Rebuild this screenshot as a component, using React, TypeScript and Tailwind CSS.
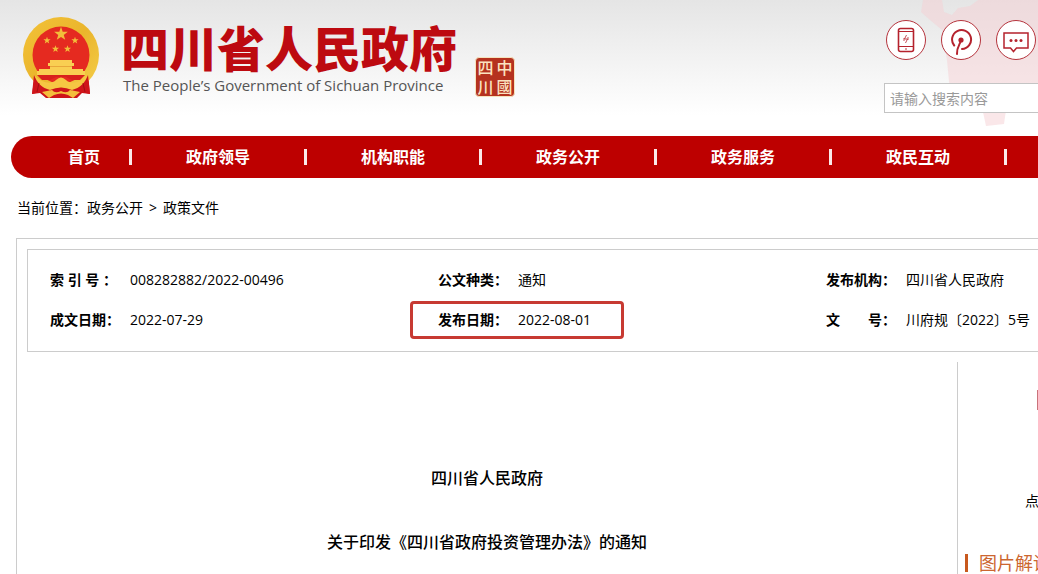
import type { ReactNode } from "react";

interface NavItem {
  label: string;
  href: string;
}

interface DocField {
  label: string;
  value: string;
  highlight?: boolean;
}

const navItems: NavItem[] = [
  { label: "政府领导", href: "#leaders" },
  { label: "机构职能", href: "#departments" },
  { label: "政务公开", href: "#open" },
  { label: "政务服务", href: "#services" },
  { label: "政民互动", href: "#interaction" },
];

const docRows: DocField[][] = [
  [
    { label: "索 引 号 ：", value: "008282882/2022-00496" },
    { label: "公文种类：", value: "通知" },
    { label: "发布机构：", value: "四川省人民政府" },
  ],
  [
    { label: "成文日期：", value: "2022-07-29" },
    { label: "发布日期：", value: "2022-08-01", highlight: true },
    { label: "文　　号：", value: "川府规〔2022〕5号" },
  ],
];

const STAR = "0,-10 2.35,-3.24 9.51,-3.09 3.8,1.24 5.88,8.09 0,4 -5.88,8.09 -3.8,1.24 -9.51,-3.09 -2.35,-3.24";

function Emblem() {
  return (
    <svg viewBox="0 0 78 82" className="h-[82px] w-[78px] shrink-0" aria-hidden="true">
      <defs>
        <linearGradient id="gold" x1="0" y1="0" x2="1" y2="1">
          <stop offset="0" stopColor="#f3c238" />
          <stop offset="0.5" stopColor="#eab52c" />
          <stop offset="1" stopColor="#f5cf4b" />
        </linearGradient>
      </defs>
      <path d="M13 57 L10 77 L18 76 L24 81 H55 L60 76 L68 77 L66 57 Z" fill="#c9141a" />
      <circle cx="39" cy="38" r="38" fill="url(#gold)" />
      <circle cx="39" cy="38" r="28.5" fill="#e52a20" />
      <g fill="#f2bd3a">
        <polygon points={STAR} transform="translate(39 17) scale(0.72)" />
        <polygon points={STAR} transform="translate(25 23.5) scale(0.38)" />
        <polygon points={STAR} transform="translate(53 23.5) scale(0.38)" />
        <polygon points={STAR} transform="translate(33.5 32) scale(0.38)" />
        <polygon points={STAR} transform="translate(45.5 32) scale(0.38)" />
      </g>
      <path d="M28 43 H50 V46 H52 V49 H50 V52 H61 V54 H63 V58 H15 V54 H17 V52 H28 V49 H26 V46 H28 Z" fill="#f9cf52" />
      <path d="M28 49.500 H50" stroke="#e8a83a" strokeWidth="1" />
      <path d="M15 58 H63 L58 63 H50 L44 60 H34 L28 63 H20 Z" fill="#d8201c" />
      <path d="M12 58 C20 66 29 68 34 63 Q39 58 44 63 C49 68 58 66 66 58 L62 69 C53 74 45 73 39 70 C33 73 25 74 16 69 Z" fill="#f6c643" />
      <path d="M12 58 L10 77 L18 75 L23 79 L28 73 C20 71 15 66 12 58 Z" fill="#cf141a" />
      <path d="M66 58 L68 77 L60 75 L55 79 L50 73 C58 71 63 66 66 58 Z" fill="#cf141a" />
      <path d="M28 73 Q39 68 50 73 L54 81 H24 Z" fill="#cf141a" />
      <path d="M20 75 L30 73 Q33 77 39 74 Q45 77 48 73 L58 75 L51 81 L46 78 Q39 75 32 78 L27 81 Z" fill="#f4bd3c" />
      <path d="M17 66 L15 75 M61 66 L63 75" stroke="#a30d13" strokeWidth="1" fill="none" />
    </svg>
  );
}

function Seal() {
  return (
    <div
      aria-label="中国四川"
      className="grid size-10 shrink-0 grid-cols-2 grid-rows-2 place-items-center rounded-sm border border-[#f5e3bd] bg-[#b5321f] text-base/4 font-medium text-[#fbe3c0]"
    >
      <span>四</span>
      <span>中</span>
      <span>川</span>
      <span>國</span>
    </div>
  );
}

// faint outline of the province behind the tools on the right
function ProvinceMap() {
  return (
    <svg viewBox="0 0 120 130" className="absolute top-0 right-0 h-[130px] w-[120px]" aria-hidden="true">
      <path
        d="M5 0 H24 L26 12 L34 15 L40 8 L52 6 L60 0 H120 V98 H92 L88 110 L86 124 L68 126 L65 112 L56 108 L48 100 L40 96 L32 92 L29 60 L24 30 L12 20 L3 12 Z"
        fill="#f5d0d4"
        opacity="0.5"
      />
    </svg>
  );
}

function RoundButton({ label, children }: { label: string; children: ReactNode }) {
  return (
    <button
      type="button"
      aria-label={label}
      className="flex size-10 shrink-0 items-center justify-center rounded-full border border-[#b5333c] bg-white text-[#b5222d]"
    >
      {children}
    </button>
  );
}

function Header() {
  return (
    <header className="relative flex h-[136px] items-start justify-between overflow-hidden bg-linear-to-b from-[#e5e5e5] to-white to-85%">
      <ProvinceMap />
      <div className="flex items-start pt-[17px] pl-[22px]">
        <Emblem />
        <div className="ml-[21px] pt-1 whitespace-nowrap">
          <h1 className="text-5xl/[56px] font-black text-[#bd0a10]">四川省人民政府</h1>
          <p className="pl-[2px] text-[15px]/4 text-[#555]">The People’s Government of Sichuan Province</p>
        </div>
        <div className="mt-10 ml-[18px]">
          <Seal />
        </div>
      </div>
      <div className="relative w-[154px] shrink-0 pt-5">
        <div className="flex gap-[15px] pl-[2px]">
          <RoundButton label="手机版">
            <svg viewBox="0 0 18 26" className="h-[26px] w-[18px]" fill="none" stroke="currentColor">
              <rect x="1.5" y="1.5" width="15" height="23" rx="2" strokeWidth="1.6" />
              <path d="M2 4.5 H16 M2 19.5 H16" strokeWidth="1.2" />
              <path d="M9.5 8 L7.5 12 H10.5 L8.500 16 M7 11 V14 M11 10 V13" strokeWidth="0.8" />
              <circle cx="9" cy="22" r="0.8" fill="currentColor" stroke="none" />
            </svg>
          </RoundButton>
          <RoundButton label="公众号">
            <svg viewBox="0 0 24 28" className="mt-1 h-7 w-6" fill="none" stroke="currentColor" strokeWidth="2" strokeLinecap="round">
              <path d="M5.2 17.5 A9.5 9.5 0 1 1 13 21" />
              <circle cx="12" cy="12" r="2.6" fill="currentColor" stroke="none" />
              <path d="M12 12 C11.500 16 7.500 19 8 26" />
            </svg>
          </RoundButton>
          <RoundButton label="留言">
            <svg viewBox="0 0 28 22" className="mt-1 h-[22px] w-7 shrink-0" fill="none" stroke="currentColor" strokeWidth="1.5">
              <path d="M2 2 H26 V17 H14.500 L11.500 20.500 L8.500 17 H2 Z" />
              <g fill="currentColor" stroke="none">
                <circle cx="9" cy="9.500" r="1.500" />
                <circle cx="14" cy="9.500" r="1.500" />
                <circle cx="19" cy="9.500" r="1.500" />
              </g>
            </svg>
          </RoundButton>
        </div>
        <input
          type="search"
          aria-label="搜索"
          placeholder="请输入搜索内容"
          className="mt-[23px] h-[30px] w-full border border-r-0 border-[#c4c4c4] bg-white pl-[5px] text-sm placeholder:text-[#999]"
        />
      </div>
    </header>
  );
}

function NavBar() {
  return (
    <nav className="ml-[11px] overflow-hidden rounded-l-full bg-[#bd0000] font-bold text-white">
      <ul className="flex h-[42px] items-center whitespace-nowrap">
        <li className="flex w-[121px] shrink-0 items-center justify-between pl-[57px]">
          <a href="#home">首页</a>
          <span className="h-4 w-[3px] bg-[#fbe9e9]" />
        </li>
        {navItems.map((item) => (
          <li key={item.label} className="flex w-[175px] shrink-0 items-center">
            <a href={item.href} className="flex-1 text-center">
              {item.label}
            </a>
            <span className="h-4 w-[3px] bg-[#fbe9e9]" />
          </li>
        ))}
      </ul>
    </nav>
  );
}

function DocInfo() {
  return (
    <div className="ml-[10px] overflow-hidden border border-r-0 border-[#ccc] pt-[10px] pb-[11px] pl-[22px]">
      <table className="w-full table-fixed text-left text-sm whitespace-nowrap">
        <colgroup>
          <col className="w-20" />
          <col className="w-[308px]" />
          <col className="w-20" />
          <col className="w-[308px]" />
          <col className="w-20" />
          <col />
        </colgroup>
        <tbody>
          {docRows.map((row) => (
            <tr key={row[0].label} className="h-10">
              {row.map((field) => [
                <th key={field.label} scope="row" className="relative p-0 font-bold">
                  {field.highlight && (
                    <span className="absolute top-px -left-7 h-[38px] w-[214px] rounded-sm border-3 border-[#c73a32]" />
                  )}
                  {field.label}
                </th>,
                <td key={field.value} className="p-0">
                  {field.value}
                </td>,
              ])}
            </tr>
          ))}
        </tbody>
      </table>
    </div>
  );
}

function Sidebar() {
  return (
    <aside className="w-[81px] shrink-0 overflow-hidden border-l border-[#ccc] pt-7 whitespace-nowrap">
      <div className="ml-auto h-5 w-px bg-[#c9737b]" />
      <p className="mt-[81px] pl-[67px] text-sm/5">点</p>
      <h2 className="mt-[42px] flex items-center gap-[11px] pl-[7px] text-lg/5 text-[#cc6630]">
        <span className="h-[18px] w-[3px] shrink-0 bg-[#c8591e]" />
        图片解读
      </h2>
    </aside>
  );
}

export default function App() {
  return (
    <div className="h-screen overflow-hidden bg-white font-['Open_Sans','Noto_Sans_CJK_SC',sans-serif] text-black">
      <Header />
      <NavBar />
      <div className="flex h-[60px] items-center gap-[6px] pl-[17px] text-sm">
        <span>
          当前位置：<a href="#open">政务公开</a>
        </span>
        <span>&gt;</span>
        <a href="#policy">政策文件</a>
      </div>
      <main className="ml-4 border-t border-l border-[#ccc] pt-[10px]">
        <DocInfo />
        <div className="mt-[10px] flex">
          <article className="flex-1 space-y-8 pt-[100px] pb-8 text-center text-base/8 font-medium">
            <p>四川省人民政府</p>
            <p>关于印发《四川省政府投资管理办法》的通知</p>
          </article>
          <Sidebar />
        </div>
      </main>
    </div>
  );
}
